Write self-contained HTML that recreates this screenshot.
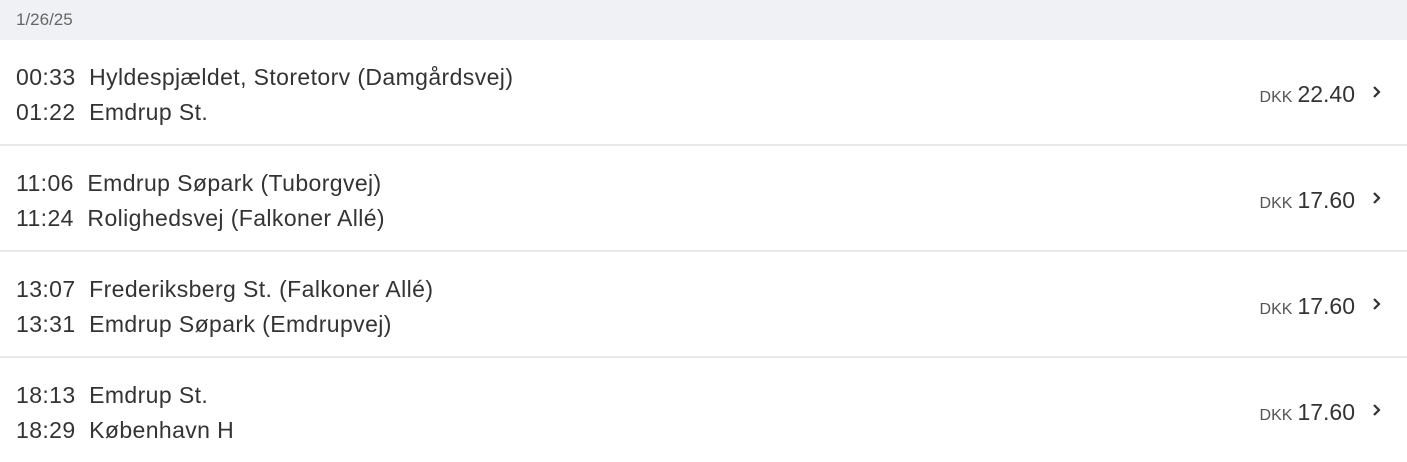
<!DOCTYPE html>
<html><head><meta charset="utf-8"><style>
body{margin:0;width:1407px;height:452px;overflow:hidden;background:#fff;font-family:"Liberation Sans",sans-serif;color:#333;}
.hdr{height:40px;background:#f0f1f5;color:#666;font-size:17px;line-height:40px;padding-left:16px;}
.row{height:104px;border-bottom:2px solid #e8e8ea;position:relative;}
.l{position:absolute;left:16px;font-size:23px;letter-spacing:0.4px;color:#333;white-space:nowrap;}
.l1{top:24px}.l2{top:59px}
.p{position:absolute;right:52px;top:41px;font-size:23px;color:#333;}
.p small{font-size:16px;color:#555;margin-right:5px;}
.c{position:absolute;right:24px;top:44px;}
</style></head><body>
<div class="hdr">1/26/25</div>
<div class="row"><div class="l l1">00:33&nbsp; Hyldespjældet, Storetorv (Damgårdsvej)</div><div class="l l2">01:22&nbsp; Emdrup St.</div><div class="p"><small>DKK</small>22.40</div><svg class="c" width="12" height="16" viewBox="0 0 12 16"><path d="M3 3l5 5-5 5" stroke="#333" stroke-width="2.2" fill="none"/></svg></div>
<div class="row"><div class="l l1">11:06&nbsp; Emdrup Søpark (Tuborgvej)</div><div class="l l2">11:24&nbsp; Rolighedsvej (Falkoner Allé)</div><div class="p"><small>DKK</small>17.60</div><svg class="c" width="12" height="16" viewBox="0 0 12 16"><path d="M3 3l5 5-5 5" stroke="#333" stroke-width="2.2" fill="none"/></svg></div>
<div class="row"><div class="l l1">13:07&nbsp; Frederiksberg St. (Falkoner Allé)</div><div class="l l2">13:31&nbsp; Emdrup Søpark (Emdrupvej)</div><div class="p"><small>DKK</small>17.60</div><svg class="c" width="12" height="16" viewBox="0 0 12 16"><path d="M3 3l5 5-5 5" stroke="#333" stroke-width="2.2" fill="none"/></svg></div>
<div class="row" style="border:none"><div class="l l1">18:13&nbsp; Emdrup St.</div><div class="l l2">18:29&nbsp; København H</div><div class="p"><small>DKK</small>17.60</div><svg class="c" width="12" height="16" viewBox="0 0 12 16"><path d="M3 3l5 5-5 5" stroke="#333" stroke-width="2.2" fill="none"/></svg></div>
</body></html>
